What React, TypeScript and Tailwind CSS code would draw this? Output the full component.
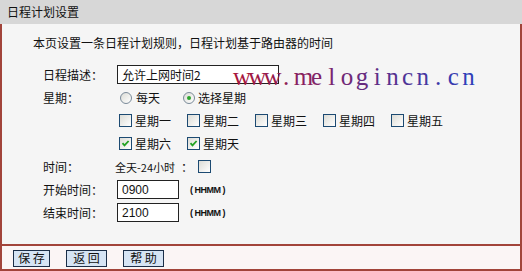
import React from "react";

const cjk = { fontFamily: '"Noto Sans CJK SC", "Liberation Sans", sans-serif' };

function Box({ checked = false }: { checked?: boolean }) {
  return (
    <span className="relative inline-block w-[13px] h-[13px] border border-[#1c4a72] bg-gradient-to-br from-[#dcdcd6] to-[#ffffff] shrink-0">
      {checked && (
        <svg viewBox="0 0 11 11" className="absolute left-0 top-0 w-[11px] h-[11px]">
          <path d="M2.5 5.2 L4.5 7.4 L8.6 3" fill="none" stroke="#21a121" strokeWidth="1.8" />
        </svg>
      )}
    </span>
  );
}

function Radio({ checked = false }: { checked?: boolean }) {
  return (
    <span className="relative inline-flex items-center justify-center w-[12px] h-[12px] rounded-full border border-[#7a8a99] bg-gradient-to-br from-[#dcdcd6] to-[#ffffff] shrink-0">
      {checked && <span className="w-[4px] h-[4px] rounded-full bg-[#2da52d]" />}
    </span>
  );
}

function Day({ label, checked = false }: { label: string; checked?: boolean }) {
  return (
    <div className="w-[68px] flex items-center gap-[3px]">
      <Box checked={checked} />
      <span>{label}</span>
    </div>
  );
}

function Row({ label, children }: { label: string; children?: React.ReactNode }) {
  return (
    <div className="h-[23px] flex items-center">
      <div className="w-[74px]">{label}</div>
      <div className="flex items-center">{children}</div>
    </div>
  );
}

function Btn({ label, w }: { label: string; w: string }) {
  return (
    <div className={`${w} h-[17px] border border-[#1b2e48] bg-[#d6e4f4] flex items-center justify-center whitespace-nowrap text-[12px] text-[#111]`}>
      {label}
    </div>
  );
}

const WM = "www.melogincn.cn";
const from = [168, 22, 62];
const to = [47, 63, 184];
function mix(t: number) {
  const c = from.map((f, i) => Math.round(f + (to[i] - f) * t));
  return `rgb(${c[0]},${c[1]},${c[2]})`;
}

export default function App() {
  return (
    <div className="relative w-[522px] h-[271px] overflow-hidden text-[12px] leading-[16px] text-[#111] bg-[#f5f5f5]" style={cjk}>
      <div className="h-[24px] bg-[#d7d7d7] pl-[7px] flex items-center">日程计划设置</div>
      <div className="h-[220px] border-l-2 border-r-2 border-[#a2443a] bg-[#f5f5f5] pt-[11px]">
        <div className="pl-[31px] h-[16px]">本页设置一条日程计划规则，日程计划基于路由器的时间</div>
        <div className="pl-[41px] mt-[12px]">
          <Row label="日程描述：">
            <div className="w-[162px] h-[19px] border border-[#222] bg-white flex items-center pl-[4px] text-[12px]">允许上网时间2</div>
          </Row>
          <Row label="星期：">
            <div className="flex items-center pl-[3px]">
              <Radio />
              <span className="ml-[4px] w-[47px]">每天</span>
              <Radio checked />
              <span className="ml-[3px]">选择星期</span>
            </div>
          </Row>
          <Row label="">
            <div className="flex items-center pl-[2px]">
              <Day label="星期一" />
              <Day label="星期二" />
              <Day label="星期三" />
              <Day label="星期四" />
              <Day label="星期五" />
            </div>
          </Row>
          <Row label="">
            <div className="flex items-center pl-[2px]">
              <Day label="星期六" checked />
              <Day label="星期天" checked />
            </div>
          </Row>
          <Row label="时间：">
            <div className="flex items-center -ml-[2px]">
              <span className="text-[11px]">全天-24小时</span>
              <span className="ml-[6px] mr-[5px]">：</span>
              <Box />
            </div>
          </Row>
          <Row label="开始时间：">
            <div className="w-[62px] h-[19px] border border-[#222] bg-white flex items-center pl-[4px]" style={{ fontFamily: '"Liberation Sans", sans-serif' }}>0900</div>
            <span className="ml-[11px] text-[9px] font-bold tracking-[-0.5px]" style={{ fontFamily: '"Liberation Sans", sans-serif' }}>( HHMM )</span>
          </Row>
          <Row label="结束时间：">
            <div className="w-[62px] h-[19px] border border-[#222] bg-white flex items-center pl-[4px]" style={{ fontFamily: '"Liberation Sans", sans-serif' }}>2100</div>
            <span className="ml-[11px] text-[9px] font-bold tracking-[-0.5px]" style={{ fontFamily: '"Liberation Sans", sans-serif' }}>( HHMM )</span>
          </Row>
        </div>
      </div>
      <div className="h-[27px] border-2 border-[#a2443a] bg-[#fbf5f5] flex items-center pl-[11px] pt-[1px]">
        <Btn label="保 存" w="w-[37px]" />
        <div className="w-[16px]" />
        <Btn label="返 回" w="w-[41px]" />
        <div className="w-[16px]" />
        <Btn label="帮 助" w="w-[41px]" />
      </div>
      <div
        className="absolute left-[233px] top-[64px] flex text-[25px] leading-[25px] whitespace-nowrap"
        style={{ fontFamily: '"Liberation Serif", "DejaVu Serif", serif' }}
      >
        {WM.split("").map((ch, i) => (
          <span key={i} className="w-[15.2px] text-center" style={{ color: mix(i / (WM.length - 1)) }}>
            {ch}
          </span>
        ))}
      </div>
    </div>
  );
}
